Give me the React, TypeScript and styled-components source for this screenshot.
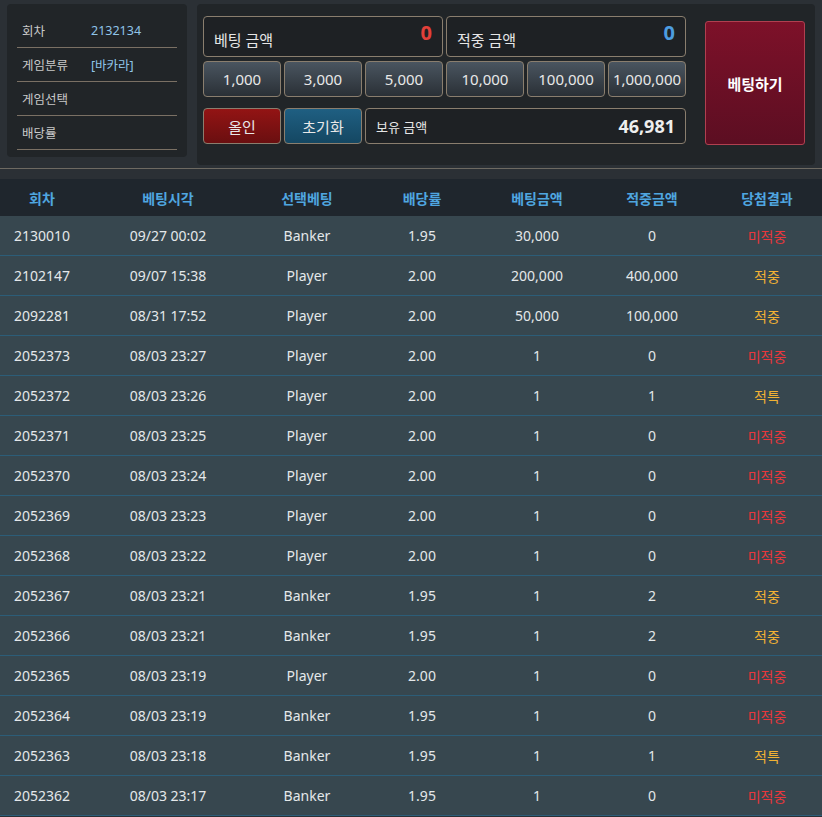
import React from 'react';
import styled, { createGlobalStyle } from 'styled-components';

const Global = createGlobalStyle`
  body { margin: 0; background: #2b3035; font-family: "Noto Sans", "Noto Sans CJK KR", sans-serif; }
`;

type Row = [string, string, string, string, string, string, string];
const rows: Row[] = [
  ['2130010', '09/27 00:02', 'Banker', '1.95', '30,000', '0', '미적중'],
  ['2102147', '09/07 15:38', 'Player', '2.00', '200,000', '400,000', '적중'],
  ['2092281', '08/31 17:52', 'Player', '2.00', '50,000', '100,000', '적중'],
  ['2052373', '08/03 23:27', 'Player', '2.00', '1', '0', '미적중'],
  ['2052372', '08/03 23:26', 'Player', '2.00', '1', '1', '적특'],
  ['2052371', '08/03 23:25', 'Player', '2.00', '1', '0', '미적중'],
  ['2052370', '08/03 23:24', 'Player', '2.00', '1', '0', '미적중'],
  ['2052369', '08/03 23:23', 'Player', '2.00', '1', '0', '미적중'],
  ['2052368', '08/03 23:22', 'Player', '2.00', '1', '0', '미적중'],
  ['2052367', '08/03 23:21', 'Banker', '1.95', '1', '2', '적중'],
  ['2052366', '08/03 23:21', 'Banker', '1.95', '1', '2', '적중'],
  ['2052365', '08/03 23:19', 'Player', '2.00', '1', '0', '미적중'],
  ['2052364', '08/03 23:19', 'Banker', '1.95', '1', '0', '미적중'],
  ['2052363', '08/03 23:18', 'Banker', '1.95', '1', '1', '적특'],
  ['2052362', '08/03 23:17', 'Banker', '1.95', '1', '0', '미적중'],
];

const Top = styled.div`
  display: flex;
  gap: 10px;
  padding: 4px 7px 0 7px;
  height: 164px;
  border-bottom: 1px solid #6e6a62;
`;

const InfoPanel = styled.div`
  width: 180px;
  height: 153px;
  background: #212528;
  border-radius: 4px;
  padding: 10px 10px 0;
  box-sizing: border-box;
`;

const InfoRow = styled.div`
  display: flex;
  align-items: center;
  height: 33px;
  border-bottom: 1px solid #7a7064;
  font-size: 12.5px;
  color: #c9c9c9;
  padding-left: 5px;
`;

const InfoLabel = styled.span`
  width: 69px;
`;

const InfoValue = styled.span`
  color: #8fc4e8;
`;

const BetPanel = styled.div`
  flex: 1;
  height: 161px;
  background: #212528;
  border-radius: 4px;
  display: flex;
  padding: 12px 10px 0 6px;
  box-sizing: border-box;
  gap: 19px;
`;

const Controls = styled.div`
  width: 483px;
  display: flex;
  flex-direction: column;
`;

const Line = styled.div<{ $mb: number }>`
  display: flex;
  gap: 3px;
  margin-bottom: ${p => p.$mb}px;
`;

const Field = styled.div<{ $h: number }>`
  flex: 1;
  height: ${p => p.$h}px;
  border: 1px solid #8a7e6e;
  border-radius: 4px;
  display: flex;
  align-items: center;
  justify-content: space-between;
  padding: 0 10px;
  color: #e6e6e6;
  box-sizing: border-box;
  background: #1e2124;
`;

const FieldLabel = styled.span<{ $small?: boolean }>`
  font-size: ${p => (p.$small ? 13 : 15)}px;
  margin-top: ${p => (p.$small ? 0 : 6)}px;
`;

const FieldValue = styled.span<{ $color: string; $size: number }>`
  color: ${p => p.$color};
  font-size: ${p => p.$size}px;
  font-weight: bold;
  align-self: ${p => (p.$size > 19 ? 'flex-start' : 'center')};
  margin-top: ${p => (p.$size > 19 ? 2 : 0)}px;
`;

const ChipButton = styled.button<{ $bg?: string }>`
  width: 78px;
  height: 36px;
  border: 1px solid #8a7e6e;
  border-radius: 4px;
  background: ${p => p.$bg ?? 'linear-gradient(#4a5560, #2a3036)'};
  color: #e8e8e8;
  font-family: inherit;
  font-size: 15px;
  padding: 0;
  flex: none;
`;

const BetButton = styled.button`
  width: 100px;
  height: 124px;
  margin-top: 5px;
  border: 1px solid #b04050;
  border-radius: 3px;
  background: linear-gradient(#7d1129, #5c0e22);
  color: #fff;
  font-family: inherit;
  font-weight: bold;
  font-size: 15px;
`;

const Grid = styled.div`
  display: grid;
  grid-template-columns: 84px 168px 110px 120px 110px 120px 110px;
  text-align: center;
`;

const Head = styled(Grid)`
  margin-top: 10px;
  height: 37px;
  align-items: center;
  background: #1f262d;
  color: #4fa6e0;
  font-weight: bold;
  font-size: 14px;
`;

const BodyRow = styled(Grid)`
  height: 39px;
  align-items: center;
  background: #37474f;
  border-bottom: 1px solid #2c5d78;
  color: #e4e8ea;
  font-size: 14px;
`;

const resultColor = (r: string) => (r === '미적중' ? '#e8373c' : '#f1b134');

const Result = styled.span<{ $c: string }>`
  color: ${p => p.$c};
`;

export default function App() {
  return (
    <>
      <Global />
      <Top>
        <InfoPanel>
          <InfoRow><InfoLabel>회차</InfoLabel><InfoValue>2132134</InfoValue></InfoRow>
          <InfoRow><InfoLabel>게임분류</InfoLabel><InfoValue>[바카라]</InfoValue></InfoRow>
          <InfoRow><InfoLabel>게임선택</InfoLabel></InfoRow>
          <InfoRow><InfoLabel>배당률</InfoLabel></InfoRow>
        </InfoPanel>
        <BetPanel>
          <Controls>
            <Line $mb={4}>
              <Field $h={41}><FieldLabel>베팅 금액</FieldLabel><FieldValue $color="#e2403a" $size={20}>0</FieldValue></Field>
              <Field $h={41}><FieldLabel>적중 금액</FieldLabel><FieldValue $color="#4d9de0" $size={20}>0</FieldValue></Field>
            </Line>
            <Line $mb={11}>
              {['1,000', '3,000', '5,000', '10,000', '100,000', '1,000,000'].map(v => (
                <ChipButton key={v}>{v}</ChipButton>
              ))}
            </Line>
            <Line $mb={0}>
              <ChipButton $bg="linear-gradient(#931414, #6a0f10)">올인</ChipButton>
              <ChipButton $bg="linear-gradient(#1f5f82, #144762)">초기화</ChipButton>
              <Field $h={36}><FieldLabel $small>보유 금액</FieldLabel><FieldValue $color="#eeeeee" $size={18}>46,981</FieldValue></Field>
            </Line>
          </Controls>
          <BetButton>베팅하기</BetButton>
        </BetPanel>
      </Top>
      <Head>
        {['회차', '베팅시각', '선택베팅', '배당률', '베팅금액', '적중금액', '당첨결과'].map(h => (
          <span key={h}>{h}</span>
        ))}
      </Head>
      {rows.map(r => (
        <BodyRow key={r[0]}>
          {r.slice(0, 6).map((c, i) => <span key={i}>{c}</span>)}
          <Result $c={resultColor(r[6])}>{r[6]}</Result>
        </BodyRow>
      ))}
    </>
  );
}
